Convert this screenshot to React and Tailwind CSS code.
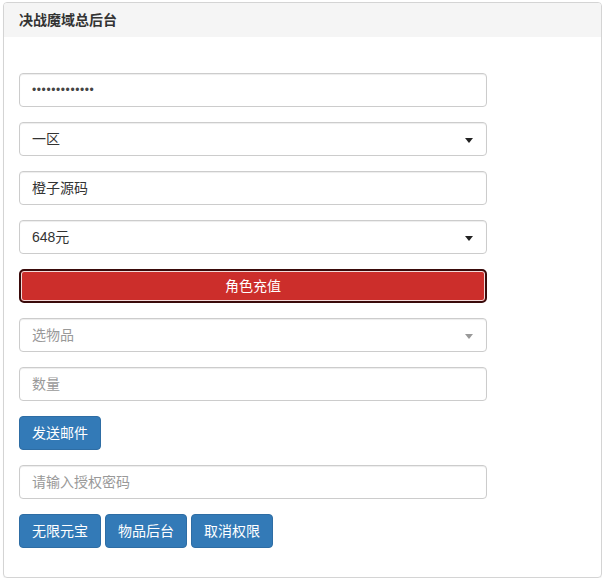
const font = { fontFamily: '"Liberation Sans", "Noto Sans CJK SC", sans-serif' };

const Caret = ({ light }) => (
    <span
        className={`absolute right-[13px] top-[15px] w-0 h-0 border-l-[4px] border-r-[4px] border-t-[5px] border-l-transparent border-r-transparent ${light ? "border-t-[#999]" : "border-t-[#222]"}`}
    />
);

const Field = ({ children, placeholder, select, light }) => (
    <div className="relative w-[468px] h-[34px] mb-[15px] px-[12px] flex items-center border border-[#ccc] rounded-[4px] bg-white shadow-[inset_0_1px_1px_rgba(0,0,0,0.075)] text-[14px] text-[#333]">
        {placeholder ? <span className="text-[#999]">{placeholder}</span> : children}
        {select && <Caret light={light} />}
    </div>
);

const BlueBtn = ({ children }) => (
    <button className="h-[34px] px-[12px] bg-[#337ab7] border border-[#2e6da4] rounded-[4px] text-white text-[14px] leading-[20px]">
        {children}
    </button>
);

const App = () => {
    return (
        <div className="w-[602px] h-[578px] bg-white pt-[2px] pl-[3px] overflow-hidden" style={font}>
            <div className="w-[599px] h-[576px] border border-[#d4d4d4] rounded-[4px] shadow-[0_1px_1px_rgba(0,0,0,0.05)] overflow-hidden">
                <div className="h-[34px] bg-[#f5f5f5] px-[15px] flex items-center">
                    <h3 className="text-[14px] font-bold text-[#333]">决战魔域总后台</h3>
                </div>
                <div className="pt-[36px] px-[15px]">
                    <Field>
                        <span className="text-[12px] tracking-[0.6px] text-[#444]">•••••••••••••</span>
                    </Field>
                    <Field select>一区</Field>
                    <Field>橙子源码</Field>
                    <Field select>648元</Field>
                    <button className="w-[468px] h-[34px] mb-[15px] rounded-[5px] border-2 border-[#3a0b0b] bg-[#cc2e2b] shadow-[inset_0_0_0_1px_#f3dada] text-white text-[14px]">
                        角色充值
                    </button>
                    <Field select light placeholder="选物品" />
                    <Field placeholder="数量" />
                    <div className="mb-[15px]">
                        <BlueBtn>发送邮件</BlueBtn>
                    </div>
                    <Field placeholder="请输入授权密码" />
                    <div className="flex gap-[4px]">
                        <BlueBtn>无限元宝</BlueBtn>
                        <BlueBtn>物品后台</BlueBtn>
                        <BlueBtn>取消权限</BlueBtn>
                    </div>
                </div>
            </div>
        </div>
    );
};

export default App;
